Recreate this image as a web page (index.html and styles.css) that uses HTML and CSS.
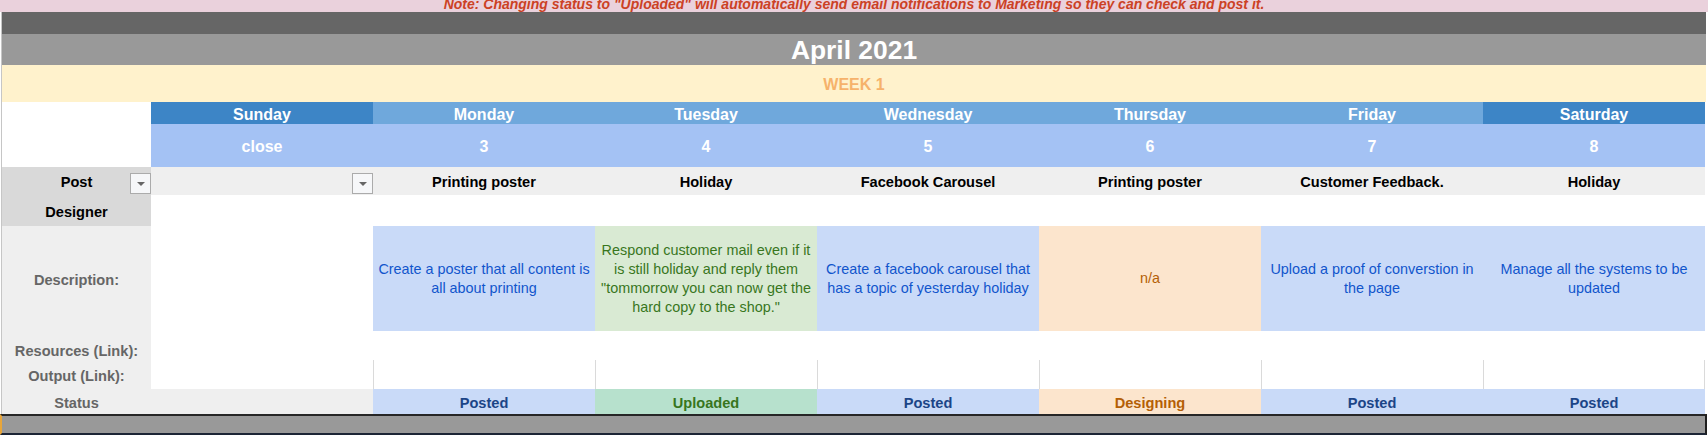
FILE: index.html
```html
<!DOCTYPE html>
<html>
<head>
<meta charset="utf-8">
<link rel="stylesheet" href="styles.css">
</head>
<body>
<div class="note"><div class="note-text">Note: Changing status to "Uploaded" will automatically send email notifications to Marketing so they can check and post it.</div></div>
<div class="sheet">
  <div class="band band-dark"></div>
  <div class="band band-title">April 2021</div>
  <div class="band band-week">WEEK 1</div>
  <div class="grid">
    <div class="c corner"></div>
    <div class="c dh weekend">Sunday</div>
    <div class="c dh">Monday</div>
    <div class="c dh">Tuesday</div>
    <div class="c dh">Wednesday</div>
    <div class="c dh">Thursday</div>
    <div class="c dh">Friday</div>
    <div class="c dh weekend">Saturday</div>

    <div class="c dt">close</div>
    <div class="c dt">3</div>
    <div class="c dt">4</div>
    <div class="c dt">5</div>
    <div class="c dt">6</div>
    <div class="c dt">7</div>
    <div class="c dt">8</div>

    <div class="c lab dark">Post<span class="dd"><span class="tri"></span></span></div>
    <div class="c post"><span class="dd"><span class="tri"></span></span></div>
    <div class="c post">Printing poster</div>
    <div class="c post">Holiday</div>
    <div class="c post">Facebook Carousel</div>
    <div class="c post">Printing poster</div>
    <div class="c post">Customer Feedback.</div>
    <div class="c post">Holiday</div>

    <div class="c lab dark">Designer</div>
    <div class="c"></div><div class="c"></div><div class="c"></div><div class="c"></div><div class="c"></div><div class="c"></div><div class="c"></div>

    <div class="c lab light grey">Description:</div>
    <div class="c"></div>
    <div class="c desc blue">Create a poster that all content is all about printing</div>
    <div class="c desc green">Respond customer mail even if it is still holiday and reply them "tommorrow you can now get the hard copy to the shop."</div>
    <div class="c desc blue">Create a facebook carousel that has a topic of yesterday holiday</div>
    <div class="c desc orange">n/a</div>
    <div class="c desc blue">Upload a proof of converstion in the page</div>
    <div class="c desc blue">Manage all the systems to be updated</div>

    <div class="c lab light grey bottom">Resources (Link):</div>
    <div class="c"></div><div class="c"></div><div class="c"></div><div class="c"></div><div class="c"></div><div class="c"></div><div class="c"></div>

    <div class="c lab light grey">Output (Link):</div>
    <div class="c"></div>
    <div class="c out"></div><div class="c out"></div><div class="c out"></div><div class="c out"></div><div class="c out"></div><div class="c out last"></div>

    <div class="c lab light grey">Status</div>
    <div class="c light"></div>
    <div class="c st posted">Posted</div>
    <div class="c st uploaded">Uploaded</div>
    <div class="c st posted">Posted</div>
    <div class="c st designing">Designing</div>
    <div class="c st posted">Posted</div>
    <div class="c st posted">Posted</div>
  </div>
</div>
<div class="bottombar"></div>
</body>
</html>
```

FILE: styles.css
```css
* { box-sizing: border-box; }
html, body {
  margin: 0;
  padding: 0;
  background: #ffffff;
}
body {
  width: 1708px;
  height: 435px;
  overflow: hidden;
  font-family: "Liberation Sans", Arial, sans-serif;
}
.note {
  height: 12px;
  background: #ead1dc;
  overflow: hidden;
  text-align: center;
}
.note-text {
  margin-top: -2px;
  line-height: 12px;
  font-size: 14px;
  font-weight: bold;
  font-style: italic;
  color: #cc4125;
  white-space: nowrap;
}
.sheet {
  margin-left: 1px;
  border-left: 1px solid #c6c6c6;
  width: 1705px;
}
.band {
  display: flex;
  align-items: center;
  justify-content: center;
  color: #ffffff;
  font-weight: bold;
}
.band-dark { height: 22px; background: #666666; }
.band-title { height: 31px; background: #999999; font-size: 26.4px; padding-top: 1px; }
.band-week { height: 37px; background: #fff2cc; color: #f6b26b; font-size: 16px; padding-top: 2px; }

.grid {
  display: grid;
  grid-template-columns: 149px repeat(7, 222px);
  grid-template-rows: 22px 43px 28px 31px 105px 29px 29px 25px;
}
.c {
  position: relative;
  display: flex;
  align-items: center;
  justify-content: center;
  text-align: center;
  background: #ffffff;
  font-size: 14.6px;
  font-weight: bold;
  color: #000000;
  padding-top: 2px;
}
.corner { grid-row: span 2; }
.dh { background: #6fa8dc; color: #ffffff; font-size: 16px; padding-top: 3px; }
.dh.weekend { background: #3d85c6; }
.dt { background: #a4c2f4; color: #ffffff; font-size: 16px; padding-top: 3px; }
.lab.dark { background: #d9d9d9; }
.light { background: #efefef; }
.grey { color: #666666; }
.bottom { align-items: flex-end; padding-bottom: 1px; }
.post { background: #efefef; }
.dd {
  position: absolute;
  right: 0;
  top: 6px;
  width: 21px;
  height: 21px;
  border: 1px solid #ababab;
  background: #f6f7f9;
  display: flex;
  align-items: center;
  justify-content: center;
}
.tri {
  width: 0;
  height: 0;
  border-left: 4px solid transparent;
  border-right: 4px solid transparent;
  border-top: 4px solid #666666;
}
.desc {
  font-weight: normal;
  font-size: 14.4px;
  line-height: 19px;
  padding: 0 3px;
}
.desc.blue { background: #c9daf8; color: #1155cc; }
.desc.green { background: #d9ead3; color: #38761d; }
.desc.orange { background: #fce5cd; color: #b45f06; }
.out { border-left: 1px solid #dadada; }
.out.last { border-right: 1px solid #dadada; }
.st { font-size: 14.6px; }
.st.posted { background: #c9daf8; color: #1c4587; }
.st.uploaded { background: #b7e1cd; color: #38761d; }
.st.designing { background: #fce5cd; color: #b45f06; }

.bottombar {
  width: 1707px;
  height: 21px;
  background: #999999;
  border-top: 2px solid #262626;
  border-bottom: 2px solid #1c2535;
  border-left: 2px solid #e9a63a;
  border-right: 2px solid #1f1f1f;
}
```
